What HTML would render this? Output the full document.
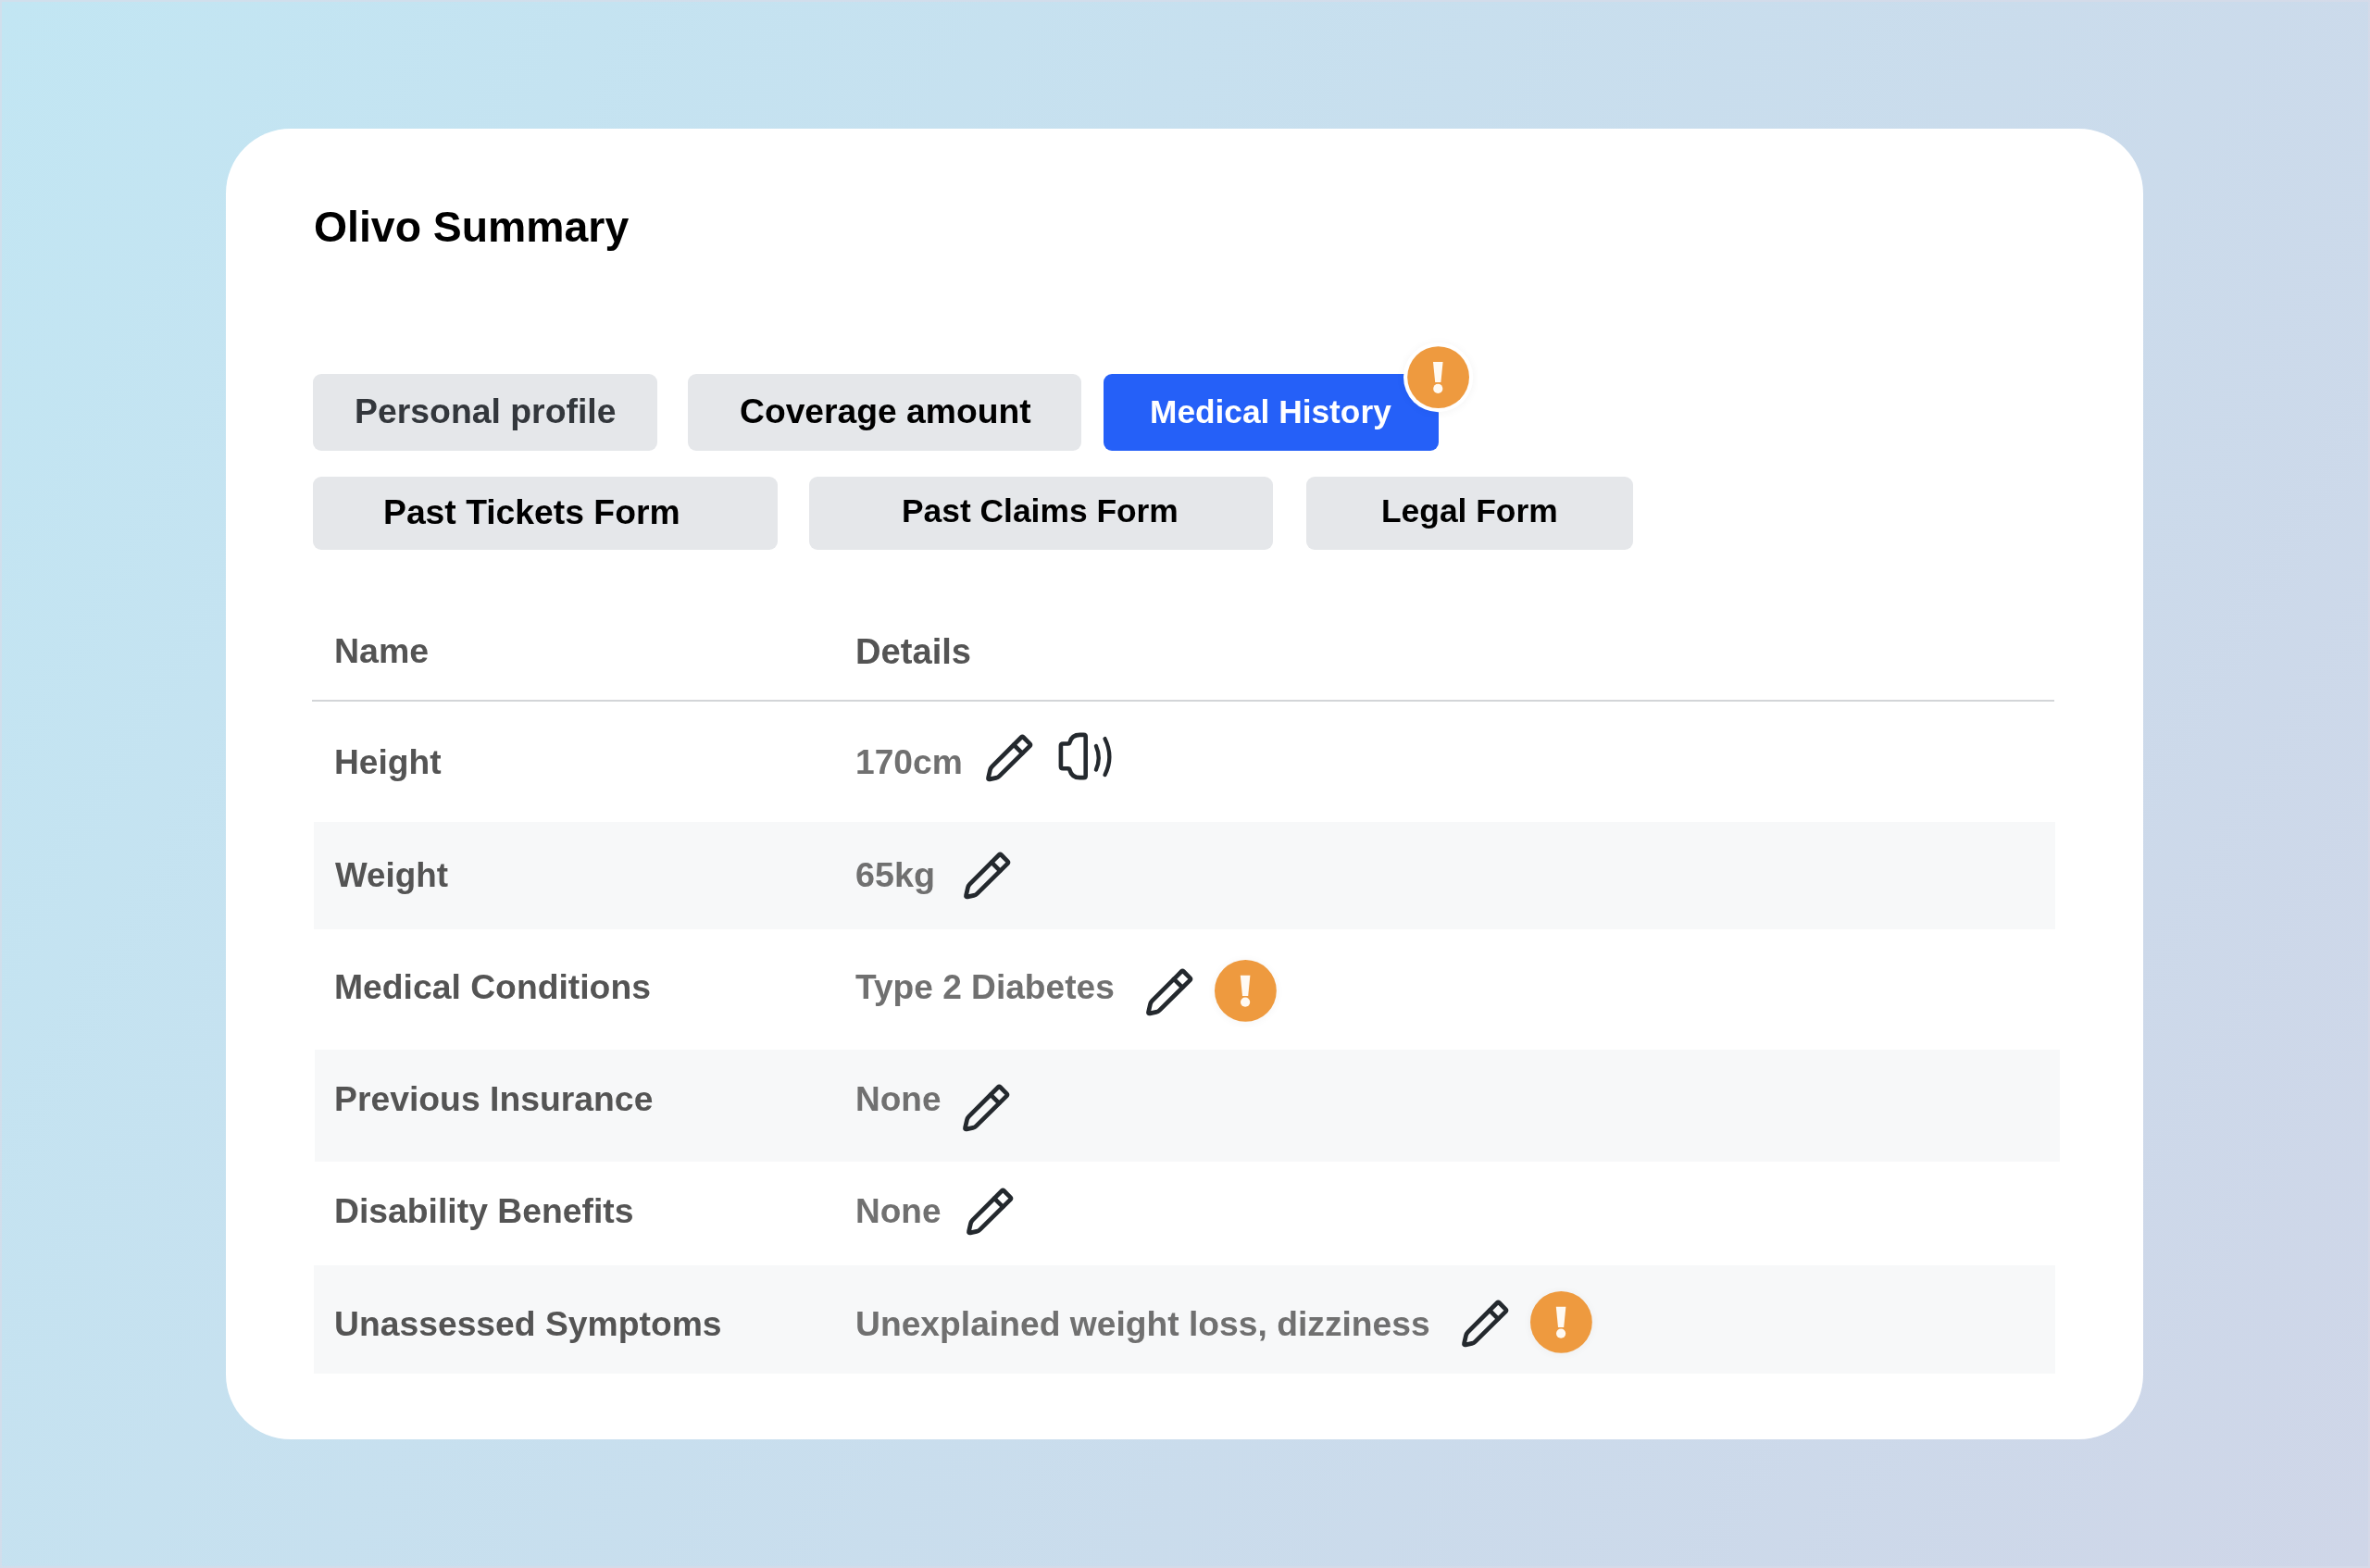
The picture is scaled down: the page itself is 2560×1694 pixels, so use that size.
<!DOCTYPE html>
<html lang="en"><head><meta charset="utf-8"><title>Olivo Summary</title>
<style>
html,body{margin:0;padding:0}
body{width:2560px;height:1694px;position:relative;overflow:hidden;background:linear-gradient(120deg,#c2e6f3 0%,#cfd6e8 100%);font-family:"Liberation Sans",Arial,Helvetica,sans-serif;font-weight:700;box-shadow:inset 0 0 0 2px rgba(219,219,232,.6)}
.card,.tabs,.tab,.table,.row,.rule,.t,.i{position:absolute;box-sizing:border-box;margin:0;padding:0}
.card{background:#fff;border-radius:70px}
.tab{border:0;border-radius:9px;font:inherit;cursor:pointer;display:block;overflow:visible}
.t{line-height:1;white-space:nowrap;font-weight:700;will-change:transform;-webkit-font-smoothing:antialiased}
.i{overflow:visible}
</style></head><body>
<svg width="0" height="0" style="position:absolute" aria-hidden="true"><defs><filter id="bl" x="-30%" y="-30%" width="160%" height="160%"><feGaussianBlur stdDeviation="4"/></filter></defs></svg>
<main class="card" style="left:244px;top:139px;width:2071px;height:1416px;">
  <h1 class="t" style="left:95px;top:83px;font-size:46.38px;color:#000">Olivo Summary</h1>
  <nav class="tabs" aria-label="Sections" style="left:94px;top:265px;width:1426px;height:190px;">
    <button class="tab" type="button" style="left:0px;top:0px;width:372px;height:83px;background:#e5e7ea">
      <span class="t" style="left:45px;top:22px;font-size:37.38px;color:#33373c">Personal profile</span>
    </button>
    <button class="tab" type="button" style="left:405px;top:0px;width:425px;height:83px;background:#e5e7ea">
      <span class="t" style="left:56px;top:22px;font-size:37.26px;color:#000">Coverage amount</span>
    </button>
    <button class="tab active" type="button" aria-current="true" style="left:854px;top:0px;width:362px;height:83px;background:#2560f8">
      <span class="t" style="left:50px;top:23px;font-size:35.29px;color:#fff">Medical History</span>
    </button>
    <svg class="i ic-warn" width="99.2" height="99.2" viewBox="0 0 99.2 99.2" role="img" aria-label="Needs attention" style="left:1165.90px;top:-46.50px;"><circle cx="49.6" cy="50.6" r="38.6" fill="#000" opacity="0.035" filter="url(#bl)"/><circle cx="49.6" cy="49.6" r="37.6" fill="#fff"/><circle cx="49.6" cy="49.6" r="33.4" fill="#ee9a3f"/><path d="M44.00 33.00 L54.60 33.00 L52.40 55.10 L46.20 55.10 Z" fill="#fffaf3"/><circle cx="49.30" cy="61.90" r="5.1" fill="#fffaf3"/></svg>
    <button class="tab" type="button" style="left:0px;top:111px;width:502px;height:79px;background:#e5e7ea">
      <span class="t" style="left:76px;top:20px;font-size:37.3px;color:#000">Past Tickets Form</span>
    </button>
    <button class="tab" type="button" style="left:536px;top:111px;width:501px;height:79px;background:#e5e7ea">
      <span class="t" style="left:100px;top:19px;font-size:35.39px;color:#000">Past Claims Form</span>
    </button>
    <button class="tab" type="button" style="left:1073px;top:111px;width:353px;height:79px;background:#e5e7ea">
      <span class="t" style="left:81px;top:19px;font-size:35.39px;color:#000">Legal Form</span>
    </button>
  </nav>
  <section class="table" role="table" aria-label="Medical history" style="left:93px;top:501px;width:1888px;height:844px;">
    <div class="row head" role="row" style="left:0px;top:0px;width:1882px;height:118px;">
      <span class="t" role="columnheader" style="left:24px;top:45px;font-size:37.52px;color:#545454">Name</span>
      <span class="t" role="columnheader" style="left:587px;top:45px;font-size:38.15px;color:#545454">Details</span>
    </div>
    <div class="rule" style="left:0px;top:116px;width:1882px;height:2px;background:#d3d5d8"></div>
    <div class="row" role="row" style="left:2px;top:126px;width:1881px;height:116px;">
      <span class="t" role="cell" style="left:22px;top:39px;font-size:37.17px;color:#545454">Height</span>
      <span class="t" role="cell" style="left:585px;top:39px;font-size:37.17px;color:#707070">170cm</span>
      <svg class="i ic-edit" width="57" height="57" viewBox="-3 -3 57 57" role="img" aria-label="Edit" style="left:722.70px;top:24.90px;"><g fill="none" stroke="#24292e" stroke-width="4.7" stroke-linejoin="round" stroke-linecap="round"><path d="M38.17 2.53 Q39.30 1.40 40.43 2.53 L47.47 9.57 Q48.60 10.70 47.46 11.82 L14.56 44.35 Q13.00 45.90 10.85 46.37 L4.05 47.87 Q2.10 48.30 2.55 46.35 L4.51 37.84 Q5.00 35.70 6.56 34.14 Z"/><path d="M30.0 10.7 L39.25 19.95"/></g></svg>
      <svg class="i ic-speak" width="70" height="70" viewBox="0 0 70 70" role="img" aria-label="Read aloud" style="left:796px;top:17px;"><g fill="none" stroke="#24292e" stroke-width="4.6" stroke-linejoin="round" stroke-linecap="round"><path d="M13.1 20.5 L18.6 20.5 Q20.1 20.5 20.5 19 C22 13.5 26.5 10.9 31.5 10.9 L35.5 10.9 Q37.7 10.9 37.7 13.1 L37.7 54.9 Q37.7 57.1 35.5 57.1 L31.5 57.1 C26.5 57.1 22 54.5 20.5 48.8 Q20.1 47.3 18.6 47.3 L13.1 47.3 Q10.9 47.3 10.9 45.1 L10.9 22.7 Q10.9 20.5 13.1 20.5 Z"/><path stroke-width="4.3" d="M48.9 22.9 Q54.6 35.7 48.9 48.6"/><path stroke-width="4.3" d="M58.5 15.1 Q68.2 34.6 58.5 54.1"/></g></svg>
    </div>
    <div class="row alt" role="row" style="left:2px;top:248px;width:1881px;height:116px;background:#f7f8f9">
      <span class="t" role="cell" style="left:23px;top:40px;font-size:36.8px;color:#545454">Weight</span>
      <span class="t" role="cell" style="left:585px;top:39px;font-size:37.73px;color:#707070">65kg</span>
      <svg class="i ic-edit" width="57" height="57" viewBox="-3 -3 57 57" role="img" aria-label="Edit" style="left:699.20px;top:30.30px;"><g fill="none" stroke="#24292e" stroke-width="4.7" stroke-linejoin="round" stroke-linecap="round"><path d="M38.17 2.53 Q39.30 1.40 40.43 2.53 L47.47 9.57 Q48.60 10.70 47.46 11.82 L14.56 44.35 Q13.00 45.90 10.85 46.37 L4.05 47.87 Q2.10 48.30 2.55 46.35 L4.51 37.84 Q5.00 35.70 6.56 34.14 Z"/><path d="M30.0 10.7 L39.25 19.95"/></g></svg>
    </div>
    <div class="row" role="row" style="left:2px;top:368px;width:1881px;height:116px;">
      <span class="t" role="cell" style="left:22px;top:40px;font-size:37.31px;color:#545454">Medical Conditions</span>
      <span class="t" role="cell" style="left:585px;top:40px;font-size:37.11px;color:#707070">Type 2 Diabetes</span>
      <svg class="i ic-edit" width="57" height="57" viewBox="-3 -3 57 57" role="img" aria-label="Edit" style="left:895.90px;top:35.80px;"><g fill="none" stroke="#24292e" stroke-width="4.7" stroke-linejoin="round" stroke-linecap="round"><path d="M38.17 2.53 Q39.30 1.40 40.43 2.53 L47.47 9.57 Q48.60 10.70 47.46 11.82 L14.56 44.35 Q13.00 45.90 10.85 46.37 L4.05 47.87 Q2.10 48.30 2.55 46.35 L4.51 37.84 Q5.00 35.70 6.56 34.14 Z"/><path d="M30.0 10.7 L39.25 19.95"/></g></svg>
      <svg class="i ic-warn" width="90.8" height="90.8" viewBox="0 0 90.8 90.8" role="img" aria-label="Needs attention" style="left:960.90px;top:16.80px;"><circle cx="45.4" cy="46.4" r="34.4" fill="#000" opacity="0.035" filter="url(#bl)"/><circle cx="45.4" cy="45.4" r="33.4" fill="#ee9a3f"/><path d="M39.80 28.80 L50.40 28.80 L48.20 50.90 L42.00 50.90 Z" fill="#fffaf3"/><circle cx="45.10" cy="57.70" r="5.1" fill="#fffaf3"/></svg>
    </div>
    <div class="row alt" role="row" style="left:3px;top:494px;width:1885px;height:121px;background:#f7f8f9">
      <span class="t" role="cell" style="left:21px;top:35px;font-size:37.35px;color:#545454">Previous Insurance</span>
      <span class="t" role="cell" style="left:584px;top:35px;font-size:37.02px;color:#707070">None</span>
      <svg class="i ic-edit" width="57" height="57" viewBox="-3 -3 57 57" role="img" aria-label="Edit" style="left:696.60px;top:34.80px;"><g fill="none" stroke="#24292e" stroke-width="4.7" stroke-linejoin="round" stroke-linecap="round"><path d="M38.17 2.53 Q39.30 1.40 40.43 2.53 L47.47 9.57 Q48.60 10.70 47.46 11.82 L14.56 44.35 Q13.00 45.90 10.85 46.37 L4.05 47.87 Q2.10 48.30 2.55 46.35 L4.51 37.84 Q5.00 35.70 6.56 34.14 Z"/><path d="M30.0 10.7 L39.25 19.95"/></g></svg>
    </div>
    <div class="row" role="row" style="left:2px;top:611px;width:1881px;height:116px;">
      <span class="t" role="cell" style="left:22px;top:39px;font-size:37.32px;color:#545454">Disability Benefits</span>
      <span class="t" role="cell" style="left:585px;top:39px;font-size:37.02px;color:#707070">None</span>
      <svg class="i ic-edit" width="57" height="57" viewBox="-3 -3 57 57" role="img" aria-label="Edit" style="left:702.10px;top:30.40px;"><g fill="none" stroke="#24292e" stroke-width="4.7" stroke-linejoin="round" stroke-linecap="round"><path d="M38.17 2.53 Q39.30 1.40 40.43 2.53 L47.47 9.57 Q48.60 10.70 47.46 11.82 L14.56 44.35 Q13.00 45.90 10.85 46.37 L4.05 47.87 Q2.10 48.30 2.55 46.35 L4.51 37.84 Q5.00 35.70 6.56 34.14 Z"/><path d="M30.0 10.7 L39.25 19.95"/></g></svg>
    </div>
    <div class="row alt" role="row" style="left:2px;top:727px;width:1881px;height:117px;background:#f7f8f9">
      <span class="t" role="cell" style="left:22px;top:45px;font-size:37.29px;color:#545454">Unassessed Symptoms</span>
      <span class="t" role="cell" style="left:585px;top:45px;font-size:37.24px;color:#707070">Unexplained weight loss, dizziness</span>
      <svg class="i ic-edit" width="57" height="57" viewBox="-3 -3 57 57" role="img" aria-label="Edit" style="left:1237.40px;top:34.90px;"><g fill="none" stroke="#24292e" stroke-width="4.7" stroke-linejoin="round" stroke-linecap="round"><path d="M38.17 2.53 Q39.30 1.40 40.43 2.53 L47.47 9.57 Q48.60 10.70 47.46 11.82 L14.56 44.35 Q13.00 45.90 10.85 46.37 L4.05 47.87 Q2.10 48.30 2.55 46.35 L4.51 37.84 Q5.00 35.70 6.56 34.14 Z"/><path d="M30.0 10.7 L39.25 19.95"/></g></svg>
      <svg class="i ic-warn" width="90.8" height="90.8" viewBox="0 0 90.8 90.8" role="img" aria-label="Needs attention" style="left:1301.90px;top:16.10px;"><circle cx="45.4" cy="46.4" r="34.4" fill="#000" opacity="0.035" filter="url(#bl)"/><circle cx="45.4" cy="45.4" r="33.4" fill="#ee9a3f"/><path d="M39.80 28.80 L50.40 28.80 L48.20 50.90 L42.00 50.90 Z" fill="#fffaf3"/><circle cx="45.10" cy="57.70" r="5.1" fill="#fffaf3"/></svg>
    </div>
  </section>
</main>
</body></html>
